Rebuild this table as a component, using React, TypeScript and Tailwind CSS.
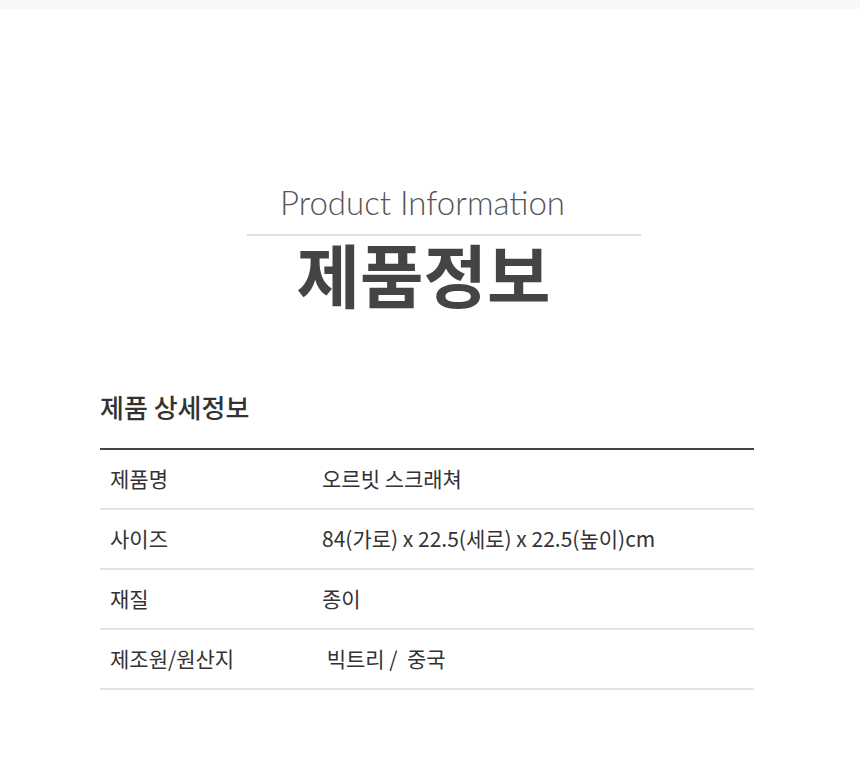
export default function App() {
  const rows = [
    ["제품명", "오르빗 스크래쳐"],
    ["사이즈", "84(가로) x 22.5(세로) x 22.5(높이)cm"],
    ["재질", "종이"],
    ["제조원/원산지", " 빅트리 /  중국"],
  ];
  return (
    <div className="w-[860px] h-[776px] bg-white" style={{ fontFamily: '"Noto Sans CJK KR", "Noto Sans", sans-serif' }}>
      <div className="h-[9px] bg-[#f8f8f8]" />
      <div className="flex flex-col items-center pt-[173px]">
        <div className="text-[33px] leading-[40px] text-[#555] font-light mr-[15px]" style={{ fontFamily: 'Lato, "Noto Sans CJK KR", sans-serif' }}>
          Product Information
        </div>
        <div className="w-[394px] h-[2px] bg-[#e0e0e0] mt-[12px] ml-[28px]" />
        <div className="text-[69px] leading-[76px] font-bold text-[#444] -mt-[1px] mr-[13px]">제품정보</div>
      </div>
      <div className="ml-[100px] w-[654px] mt-[79px]">
        <div className="text-[26px] leading-[34px] font-medium text-[#333]">제품 상세정보</div>
        <div className="h-[2px] bg-[#444] mt-[24px]" />
        {rows.map(([k, v]) => (
          <div key={k} className="flex h-[60px] items-center border-b-2 border-[#e4e4e4] text-[21px] text-[#333] whitespace-pre">
            <div className="w-[222px] pl-[10px]">{k}</div>
            <div>{v}</div>
          </div>
        ))}
      </div>
    </div>
  );
}
